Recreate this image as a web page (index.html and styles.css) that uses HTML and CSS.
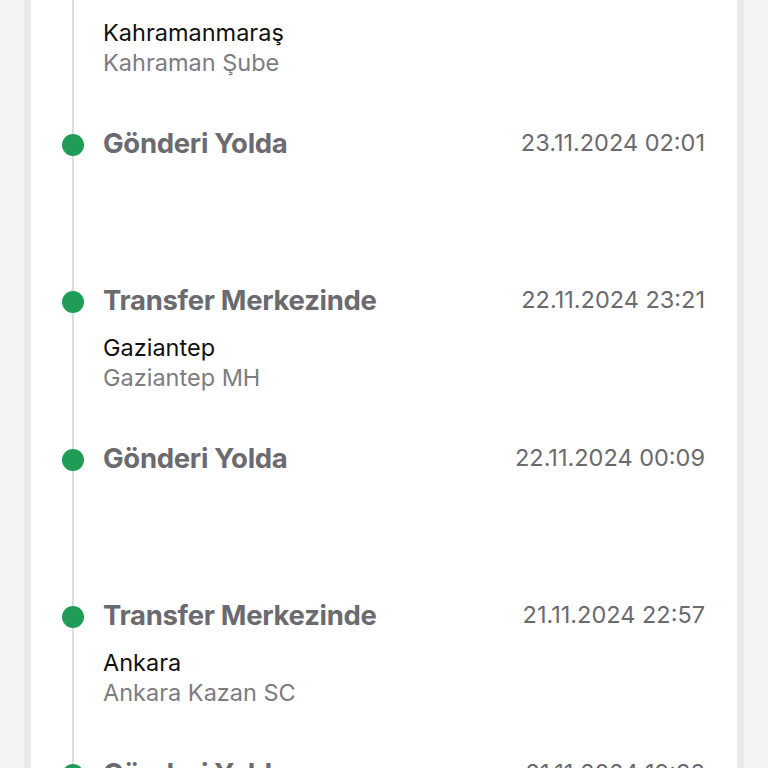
FILE: index.html
```html
<!DOCTYPE html>
<html lang="tr">
<head>
    <meta charset="UTF-8">
    <meta name="viewport" content="width=device-width, initial-scale=1.0">
    <title>Gönderi Hareketleri</title>
    <link rel="stylesheet" href="styles.css">
</head>
<body>

    <div class="card">
        <ul class="timeline">
            <li class="event">
                <span class="dot"></span>
                <div class="event-body">
                    <div class="event-title">Transfer Merkezinde</div>
                    <div class="event-city">Kahramanmaraş</div>
                    <div class="event-branch">Kahraman Şube</div>
                </div>
                <div class="event-date">23.11.2024 00:12</div>
            </li>
            <li class="event">
                <span class="dot"></span>
                <div class="event-body">
                    <div class="event-title">Gönderi Yolda</div>
                </div>
                <div class="event-date">23.11.2024 02:01</div>
            </li>
            <li class="event">
                <span class="dot"></span>
                <div class="event-body">
                    <div class="event-title">Transfer Merkezinde</div>
                    <div class="event-city">Gaziantep</div>
                    <div class="event-branch">Gaziantep MH</div>
                </div>
                <div class="event-date">22.11.2024 23:21</div>
            </li>
            <li class="event">
                <span class="dot"></span>
                <div class="event-body">
                    <div class="event-title">Gönderi Yolda</div>
                </div>
                <div class="event-date">22.11.2024 00:09</div>
            </li>
            <li class="event">
                <span class="dot"></span>
                <div class="event-body">
                    <div class="event-title">Transfer Merkezinde</div>
                    <div class="event-city">Ankara</div>
                    <div class="event-branch">Ankara Kazan SC</div>
                </div>
                <div class="event-date">21.11.2024 22:57</div>
            </li>
            <li class="event">
                <span class="dot"></span>
                <div class="event-body">
                    <div class="event-title">Gönderi Yolda</div>
                </div>
                <div class="event-date">21.11.2024 19:38</div>
            </li>
        </ul>
    </div>

</body>
</html>
```

FILE: styles.css
```css
/* Shipment tracking timeline */
:root {
    --page-bg: #f3f4f6;
    --card-bg: #ffffff;
    --card-edge: #e8e8ea;
    --line-color: #dcdcde;
    --dot-color: #1f9d57;
    --muted-text: #6a6a6f;
    --branch-text: #7c7c81;
    --city-text: #111111;
}

html, body {
    margin: 0;
    padding: 0;
    height: 100%;
    overflow: hidden;
    background: var(--page-bg);
    font-family: Inter, "Liberation Sans", Arial, sans-serif;
}

.card {
    margin: -40px 31px 0;
    min-height: 900px;
    background: var(--card-bg);
    box-shadow: 0 0 0 7px var(--card-edge);
}

/* Timeline list */
.timeline {
    position: relative;
    list-style: none;
    margin: 0;
    padding: 10px 0 0;
}

.timeline::before {
    content: "";
    position: absolute;
    top: 0;
    bottom: 0;
    left: 41px;
    width: 2px;
    background: var(--line-color);
}

.event {
    position: relative;
    display: grid;
    grid-template-columns: 22px 1fr auto;
    column-gap: 19px;
    height: 157.5px;
    padding: 0 32px 0 31px;
    box-sizing: border-box;
}

.dot {
    width: 22px;
    height: 22px;
    margin-top: 6px;
    border-radius: 50%;
    background: var(--dot-color);
}

.event-title {
    font-size: 27.5px;
    line-height: 30px;
    font-weight: 700;
    color: var(--muted-text);
    letter-spacing: -0.3px;
}

.event-city {
    margin-top: 18px;
    font-size: 23.5px;
    line-height: 30px;
    color: var(--city-text);
}

.event-branch {
    font-size: 23.5px;
    line-height: 30px;
    color: var(--branch-text);
}

.event-date {
    font-size: 23.5px;
    line-height: 30px;
    color: var(--muted-text);
    text-align: right;
}
```
